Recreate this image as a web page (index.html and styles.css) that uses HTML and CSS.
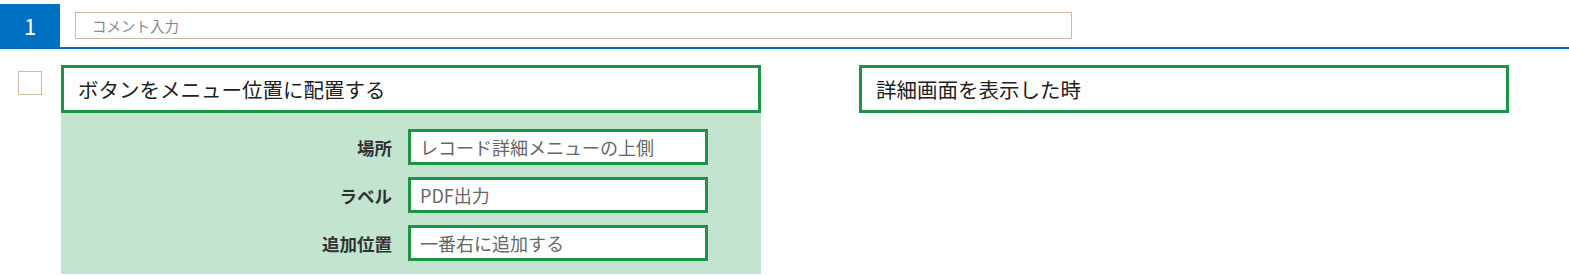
FILE: index.html
```html
<!DOCTYPE html>
<html lang="ja">
<head>
    <meta charset="UTF-8">
    <title>設定</title>
    <link rel="stylesheet" href="styles.css">
</head>
<body>
    <div class="header">
        <div class="number">1</div>
        <input class="comment" type="text" placeholder="コメント入力">
    </div>
    <div class="rule">
        <div class="check"></div>
        <div class="action">
            <div class="title">ボタンをメニュー位置に配置する</div>
            <div class="panel">
                <div class="row">
                    <label>場所</label>
                    <div class="field">レコード詳細メニューの上側</div>
                </div>
                <div class="row">
                    <label>ラベル</label>
                    <div class="field">PDF出力</div>
                </div>
                <div class="row">
                    <label>追加位置</label>
                    <div class="field">一番右に追加する</div>
                </div>
            </div>
        </div>
        <div class="trigger">
            <div class="title">詳細画面を表示した時</div>
        </div>
    </div>
</body>
</html>
```

FILE: styles.css
```css
body {
    margin: 0;
    font-family: "Noto Sans CJK JP", "Noto Sans", sans-serif;
    color: #333;
    background-color: #fff;
}
.header {
    display: flex;
    align-items: center;
    padding-top: 4px;
    border-bottom: 2px solid #0070c0;
}
.number {
    width: 60px;
    height: 43px;
    background-color: #0070c0;
    color: #fff;
    font-size: 22px;
    line-height: 43px;
    text-align: center;
}
.comment {
    margin-left: 15px;
    width: 997px;
    height: 27px;
    box-sizing: border-box;
    border: 1px solid #c9b8a6;
    padding: 0 16px;
    font-family: inherit;
    font-size: 14.5px;
    color: #333;
    outline: none;
}
.comment::placeholder {
    color: #8a8a8a;
}
.rule {
    display: flex;
    align-items: flex-start;
    padding-top: 16px;
}
.check {
    width: 22px;
    height: 22px;
    border: 1px solid #cdbba7;
    margin: 6px 19px 0 18px;
}
.action {
    width: 700px;
}
.trigger {
    width: 650px;
    margin-left: 98px;
}
.title {
    height: 48px;
    box-sizing: border-box;
    border: 3px solid #1b9445;
    padding-left: 14px;
    font-size: 20.5px;
    line-height: 43px;
    color: #222;
    background-color: #fff;
}
.panel {
    background-color: #c3e5cf;
    padding: 16px 0 13px;
    display: flex;
    flex-direction: column;
    gap: 12px;
}
.row {
    display: flex;
    align-items: center;
}
.row label {
    width: 347px;
    flex-shrink: 0;
    padding-right: 16px;
    box-sizing: border-box;
    text-align: right;
    font-weight: bold;
    font-size: 17.5px;
    color: #333;
}
.field {
    width: 300px;
    height: 36px;
    box-sizing: border-box;
    border: 3px solid #1b9445;
    background-color: #fff;
    padding-left: 9px;
    font-size: 18px;
    line-height: 30px;
    color: #666;
}
```
